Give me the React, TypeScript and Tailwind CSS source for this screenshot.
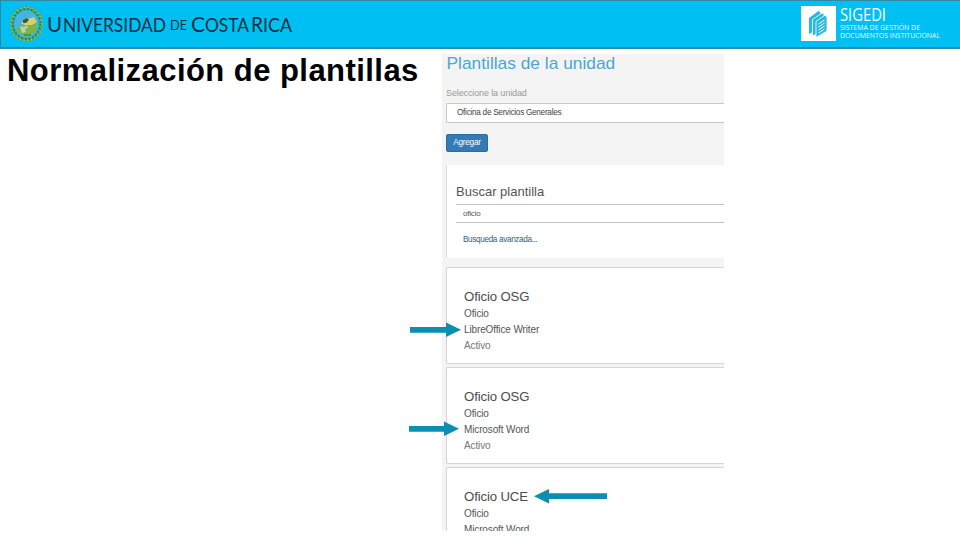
type Template = {
  name: string;
  app: string;
  status?: string;
};

const templates: Template[] = [
  { name: "Oficio OSG", app: "LibreOffice Writer", status: "Activo" },
  { name: "Oficio OSG", app: "Microsoft Word", status: "Activo" },
  { name: "Oficio UCE", app: "Microsoft Word" },
];

function Seal() {
  return (
    <svg width="36" height="38" viewBox="0 0 36 38">
      <ellipse cx="17.5" cy="19" rx="14.6" ry="15.8" fill="none" stroke="#4fa65c" strokeWidth="3.8" strokeDasharray="3 0.7" />
      <ellipse cx="17.5" cy="19" rx="15.4" ry="16.6" fill="none" stroke="#a9b84a" strokeWidth="1.8" strokeDasharray="1.6 2.2" />
      <ellipse cx="17.5" cy="19" rx="13.8" ry="15" fill="none" stroke="#1d6b66" strokeWidth="1.8" strokeDasharray="1.2 2.6" />
      <ellipse cx="17.5" cy="19" rx="12" ry="13.4" fill="#45b4e2" />
      <path d="M7 24 L13 20 L24 17 L29 21 Q28 28 18 32 Q10 29 7 24Z" fill="#7cb342" />
      <path d="M12 18 L17 14 L22 13 L25 12 L28 17 L23 20 L15 20Z" fill="#d9cf6c" />
      <path d="M14 15 L18 13 L20 15 L17 18 L14 18Z" fill="#4c5237" />
      <path d="M11 21 l4 1 3 -2 1 3 -3 1 1 3 -4 1 -1 -3z" fill="#bcd0b8" />
      <path d="M15 30 h7" stroke="#34763f" strokeWidth="1" />
    </svg>
  );
}

function DocumentsIcon() {
  return (
    <svg width="35" height="35" viewBox="0 0 35 35">
      <rect width="35" height="35" fill="#fff" />
      <path d="M8 12 L17.5 5 L19 6 V22 L8 28Z" fill="#28b9dc" />
      <path d="M11.5 13.5 L21 7 L23 8 V25 L11.5 30Z" fill="#28b9dc" stroke="#fff" strokeWidth="0.8" />
      <path d="M15 15.5 L23.5 9.5 L26 10.5 V25 L15 31.5Z" fill="#28b9dc" stroke="#fff" strokeWidth="0.8" />
      <path d="M17.5 18 l6 -4 M17.5 21 l6 -4 M17.5 24 l6 -4 M17.5 27 l6 -4" stroke="#fff" strokeWidth="1" />
    </svg>
  );
}

function Header() {
  return (
    <header className="flex h-[49px] shrink-0 items-start border-t border-b-2 border-l border-[#3287a3] bg-[#00c0f3]">
      <div className="ml-[8px] mt-[4px]">
        <Seal />
      </div>
      <svg width="260" height="44" className="ml-[1px] overflow-visible font-['Lato',sans-serif]" fill="#0c2f42">
        <text y="31" fontSize="19">
          <tspan x="1" fontSize="21.5" textLength="15" lengthAdjust="spacingAndGlyphs">U</tspan>
          <tspan x="17" textLength="103" lengthAdjust="spacingAndGlyphs">NIVERSIDAD</tspan>
          <tspan x="124" y="28.5" fontSize="13.5" textLength="17" lengthAdjust="spacingAndGlyphs">DE</tspan>
          <tspan x="145" y="31" fontSize="21.5" textLength="14" lengthAdjust="spacingAndGlyphs">C</tspan>
          <tspan x="159" textLength="44" lengthAdjust="spacingAndGlyphs">OSTA</tspan>
          <tspan x="205" fontSize="21.5" textLength="12" lengthAdjust="spacingAndGlyphs">R</tspan>
          <tspan x="217" textLength="29" lengthAdjust="spacingAndGlyphs">ICA</tspan>
        </text>
      </svg>
      <div className="ml-auto mt-[5px] flex w-[159px]">
        <DocumentsIcon />
        <svg width="110" height="36" className="ml-[3px] overflow-visible font-['Open_Sans',sans-serif]" fill="#e6f9ff">
          <text fontSize="7.5">
            <tspan x="1" y="15" fontSize="17.5" fill="#fff" textLength="46" lengthAdjust="spacingAndGlyphs">SIGEDI</tspan>
            <tspan x="1" y="23.5" textLength="80" lengthAdjust="spacingAndGlyphs">SISTEMA DE GESTIÓN DE</tspan>
            <tspan x="1" y="32" textLength="100" lengthAdjust="spacingAndGlyphs">DOCUMENTOS INSTITUCIONAL</tspan>
          </text>
        </svg>
      </div>
    </header>
  );
}

function TemplateCard({ name, app, status }: Template) {
  return (
    <div className="mb-[3px] h-[97px] shrink-0 rounded-l-[2px] border border-r-0 border-[#d4d6d8] bg-white pl-[17px] pt-[20px] text-[10px] leading-[16px] tracking-[-0.13px] text-[#555]">
      <h3 className="mb-[1px] text-[13.2px] leading-[17px] text-[#4c4c4c]">{name}</h3>
      <p>Oficio</p>
      <p>{app}</p>
      {status && <p className="text-[#777]">{status}</p>}
    </div>
  );
}

function Arrow({ className, width }: { className: string; width: number }) {
  return (
    <svg className={`absolute ${className}`} width={width} height="16" fill="#0b8fb0">
      <path d={`M0 5 H${width - 15} V0.5 L${width} 7.7 L${width - 15} 15 V10.8 H0Z`} />
    </svg>
  );
}

export default function App() {
  return (
    <div className="relative flex h-[540px] w-[960px] flex-col overflow-hidden bg-white font-['Liberation_Sans',Arial,sans-serif]">
      <Header />
      <main className="flex">
        <h1 className="w-[442px] shrink-0 whitespace-nowrap pl-[7px] pt-[3px] text-[31px] font-bold leading-[37px] tracking-[0.45px] text-black">
          Normalización de plantillas
        </h1>
        <section className="mt-[5px] flex h-[477px] w-[282px] flex-col overflow-hidden bg-[#f4f4f4] pl-[4px]">
          <h2 className="h-[31px] shrink-0 pl-[0.5px] text-[17.35px] leading-[18px] text-[#4ba7d2]">Plantillas de la unidad</h2>
          <label className="h-[18px] shrink-0 pt-[3px] text-[9px] leading-[10px] tracking-[-0.12px] text-[#999]">Seleccione la unidad</label>
          <div className="h-[20px] shrink-0 rounded-l-[2px] border border-r-0 border-[#c6c9cb] bg-white pl-[10px] text-[8.2px] leading-[18px] tracking-[-0.27px] text-[#444]">
            Oficina de Servicios Generales
          </div>
          <button className="mt-[11px] h-[18px] w-[42px] shrink-0 rounded-[2px] border border-[#2e6da4] bg-[#337ab7] text-[8.2px] leading-[16px] tracking-[-0.2px] text-white">
            Agregar
          </button>
          <div className="mb-[9px] mt-[13px] h-[93px] shrink-0 border-l border-[#d8dadb] bg-white pl-[9px] pt-[18px]">
            <h3 className="h-[21px] text-[13px] leading-[17px] text-[#555]">Buscar plantilla</h3>
            <div className="h-[19px] border-y border-[#bfc3c5] pl-[7px] text-[8px] leading-[17px] tracking-[-0.2px] text-[#555]">oficio</div>
            <a className="block pl-[7px] pt-[12px] text-[8.2px] leading-[10px] tracking-[-0.35px] text-[#31608c]">Busqueda avanzada...</a>
          </div>
          {templates.map((t, i) => (
            <TemplateCard key={i} {...t} />
          ))}
        </section>
      </main>
      <Arrow className="left-[410px] top-[322px]" width={51} />
      <Arrow className="left-[409px] top-[421px]" width={50} />
      <Arrow className="left-[534px] top-[488px] rotate-180" width={73} />
    </div>
  );
}
